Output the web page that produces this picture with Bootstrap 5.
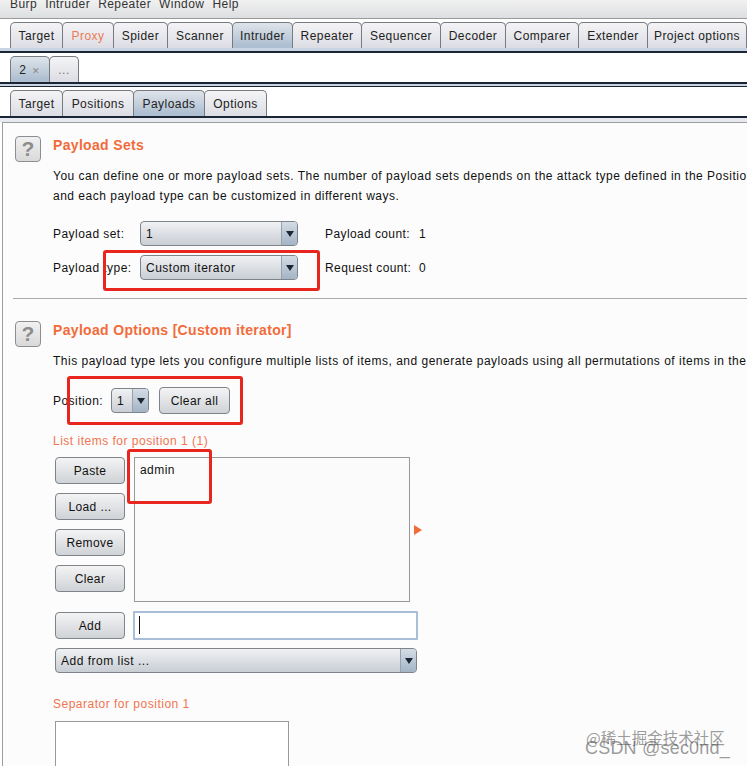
<!DOCTYPE html>
<html lang="en">
<head>
  <meta charset="UTF-8">
  <title>Burp Intruder</title>
  <link href="https://cdn.jsdelivr.net/npm/bootstrap@5.3.3/dist/css/bootstrap.min.css" rel="stylesheet">
  <style>
    html, body { height: 766px; overflow: hidden; }
    body { position: relative; width: 747px; background: #fff; color: #111; font-family: "Liberation Sans", Arial, sans-serif; font-size: 12px; line-height: 14px; letter-spacing: .45px; }

    .menu-strip { height: 19px; padding-left: 10px; gap: 8px; overflow: hidden; background: linear-gradient(#f1f1f1, #dcdee0); border-bottom: 1px solid #9a9a9a; }
    .menu-strip span { margin-top: -3px; color: #333; }

    .tab-strip { padding-left: 10px; flex-wrap: nowrap; overflow: hidden; }
    .tab-top { padding-top: 3px; height: 34px; background: #fff; border-bottom: 2px solid #1c2536; }
    .tab-mid { padding-top: 3px; height: 29px; }
    .tab-rule { height: 2px; background: #1c2536; }
    .tab-rule-thin { height: 1px; background: #1c2536; }
    .tab-item { flex: none; height: 26px; line-height: 26px; padding: 0 2px; text-align: center; color: #222; letter-spacing: .45px; border: 1px solid #767b80; border-bottom: 0; border-radius: 5px 5px 0 0; background: linear-gradient(#f4f4f6, #dcdde4); margin-right: -1px; }
    .tab-on { background: linear-gradient(#dfe4ea, #aebfd1 90%); }
    .tab-band { height: 3px; background: #c9d4e2; }
    .tab-band-thin { height: 2px; background: #c9d4e2; }
    .tab-band-wide { height: 4px; background: #e6eaef; }
    .tab-proxy { color: #ee7a55; }
    .tab-more { color: #777; }
    .tab-close { color: #888; font-size: 9px; margin-left: 6px; }

    .pane { margin-left: 2px; height: 644px; padding: 13px 0 0 12px; background: #fcfcfc; border-left: 1px solid #9c9c9c; border-top: 1px solid #9c9c9c; overflow: hidden; }
    .help-key { flex: none; width: 26px; height: 26px; line-height: 24px; text-align: center; font-size: 21px; font-weight: 700; color: #8d8d8d; letter-spacing: 0; border: 1px solid #8a8f94; border-radius: 4px; background: linear-gradient(#f1f1f1, #d9d9d9); }
    .sect-title { margin: 0 0 0 12px; font-size: 14px; line-height: 18px; font-weight: 700; color: #f26b3a; letter-spacing: .33px; }
    .sect-copy { margin: 4px 0 0 38px; white-space: nowrap; line-height: 20px; letter-spacing: .5px; }
    .field-row { margin-left: 38px; height: 25px; align-items: center; white-space: nowrap; }
    .field-first { margin-top: 15px; }
    .field-label { width: 87px; flex: none; }
    .combo { flex: none; height: 25px; line-height: 24px; padding-left: 5px; letter-spacing: .5px; border: 1px solid #7e8489; border-radius: 4px; background: linear-gradient(#f0f1f3, #c9ced5); overflow: hidden; }
    .combo-arrow { width: 16px; height: 100%; margin-left: auto; display: flex; align-items: center; justify-content: center; border-left: 1px solid #98a2ad; background: linear-gradient(#d4dce5, #a3b4c6); }
    .combo-arrow i { width: 0; height: 0; border: 4px solid transparent; border-top: 6px solid #1d2733; border-bottom: 0; }
    .count-label { width: 94px; margin-left: 27px; letter-spacing: .4px; }
    .sect-rule { height: 1px; background: #aaa; margin: 18px 0 0 -2px; }

    .burp-btn { flex: none; height: 27px; padding: 1px 0 0; color: #111; font-size: 12px; line-height: 25px; letter-spacing: .4px; border: 1px solid #7e8489; border-radius: 4px; background: linear-gradient(#f4f4f5, #cfd2d6); }
    .side-btn { width: 70px; }
    .add-btn { margin-top: 1px; }
    .clear-all { width: 71px; margin-left: 10px; }
    .sub-head { margin: 0 0 0 38px; color: #ef7550; line-height: 14px; letter-spacing: .5px; }
    .item-col { margin-left: 40px; gap: 9px; }
    .item-list { width: 276px; height: 145px; padding: 5px 5px; background: #fbfbfb; border: 1px solid #999; margin-left: 9px; }
    .item-arrow { align-self: center; margin: 0 0 0 4px; width: 0; height: 0; border: 5px solid transparent; border-left: 8px solid #f26b3a; border-right: 0; }
    .add-input { width: 285px; height: 29px; margin-left: 8px; padding: 0 4px; border: 2px solid #a9bfd9; border-radius: 1px; background: #fff; }
    .caret-bar { display: block; width: 1px; height: 18px; margin-top: 3px; background: #111; }
    .sep-box { margin-left: 40px; width: 234px; height: 80px; background: #fff; border: 1px solid #999; }

    .red-mark { position: absolute; border: 3px solid #e8261e; border-radius: 3px; pointer-events: none; }
    .mark-a { left: 103px; top: 250px; width: 217px; height: 41px; }
    .mark-b { left: 67px; top: 376px; width: 176px; height: 49px; }
    .mark-c { left: 127px; top: 449px; width: 85px; height: 55px; }
    .stamp { position: absolute; color: rgba(70,70,70,.55); white-space: nowrap; }
    .stamp-cn { left: 586px; top: 729px; font-size: 15.5px; font-family: "Noto Sans CJK SC", sans-serif; line-height: 16px; letter-spacing: 0; }
    .stamp-en { left: 585px; top: 738px; font-size: 18px; line-height: 20px; letter-spacing: .2px; }
  </style>
</head>
<body>

  <div class="menu-strip d-flex">
    <span>Burp</span><span>Intruder</span><span>Repeater</span><span>Window</span><span>Help</span>
  </div>

  <div class="tab-top">
    <div class="tab-strip d-flex">
      <div class="tab-item" style="width:53px">Target</div>
      <div class="tab-item tab-proxy" style="width:52px">Proxy</div>
      <div class="tab-item" style="width:55px">Spider</div>
      <div class="tab-item" style="width:66px">Scanner</div>
      <div class="tab-item tab-on" style="width:61px">Intruder</div>
      <div class="tab-item" style="width:70px">Repeater</div>
      <div class="tab-item" style="width:80px">Sequencer</div>
      <div class="tab-item" style="width:66px">Decoder</div>
      <div class="tab-item" style="width:74px">Comparer</div>
      <div class="tab-item" style="width:70px">Extender</div>
      <div class="tab-item" style="width:100px">Project options</div>
    </div>
    <div class="tab-band"></div>
  </div>

  <div class="tab-mid tab-strip d-flex">
    <div class="tab-item tab-on" style="width:40px">2<span class="tab-close">&#10005;</span></div>
    <div class="tab-item tab-more" style="width:30px">...</div>
  </div>
  <div class="tab-rule"></div>
  <div class="tab-band-thin"></div>
  <div class="tab-rule-thin"></div>

  <div class="tab-mid tab-strip d-flex">
    <div class="tab-item" style="width:53px">Target</div>
    <div class="tab-item" style="width:72px">Positions</div>
    <div class="tab-item tab-on" style="width:72px">Payloads</div>
    <div class="tab-item" style="width:63px">Options</div>
  </div>
  <div class="tab-rule"></div>
  <div class="tab-band-wide"></div>

  <div class="pane">
    <div class="d-flex">
      <div class="help-key">?</div>
      <h2 class="sect-title">Payload Sets</h2>
    </div>
    <p class="sect-copy mb-0">You can define one or more payload sets. The number of payload sets depends on the attack type defined in the Positions tab. Various payload types are available for each payload set,<br>and each payload type can be customized in different ways.</p>

    <div class="field-row field-first d-flex">
      <span class="field-label">Payload set:</span>
      <div class="combo d-flex" style="width:158px">1<span class="combo-arrow"><i></i></span></div>
      <span class="count-label">Payload count:</span><span>1</span>
    </div>
    <div class="field-row d-flex" style="margin-top:9px">
      <span class="field-label">Payload type:</span>
      <div class="combo d-flex" style="width:158px">Custom iterator<span class="combo-arrow"><i></i></span></div>
      <span class="count-label">Request count:</span><span>0</span>
    </div>
    <div class="sect-rule"></div>

    <div class="d-flex" style="margin-top:22px">
      <div class="help-key">?</div>
      <h2 class="sect-title">Payload Options [Custom iterator]</h2>
    </div>
    <p class="sect-copy mb-0">This payload type lets you configure multiple lists of items, and generate payloads using all permutations of items in the lists.</p>

    <div class="field-row d-flex" style="margin-top:17px">
      <span style="width:58px">Position:</span>
      <div class="combo d-flex" style="width:38px">1<span class="combo-arrow"><i></i></span></div>
      <button type="button" class="btn burp-btn clear-all">Clear all</button>
    </div>

    <p class="sub-head" style="margin-top:21px">List items for position 1 (1)</p>

    <div class="d-flex" style="margin-top:9px">
      <div class="item-col d-flex flex-column">
        <button type="button" class="btn burp-btn side-btn">Paste</button>
        <button type="button" class="btn burp-btn side-btn">Load ...</button>
        <button type="button" class="btn burp-btn side-btn">Remove</button>
        <button type="button" class="btn burp-btn side-btn">Clear</button>
      </div>
      <div class="item-list">admin</div>
      <div class="item-arrow"></div>
    </div>

    <div class="d-flex" style="margin-top:9px;margin-left:40px">
      <button type="button" class="btn burp-btn side-btn add-btn">Add</button>
      <div class="add-input"><span class="caret-bar"></span></div>
    </div>

    <div class="combo d-flex" style="width:362px;margin:8px 0 0 40px">Add from list ...<span class="combo-arrow"><i></i></span></div>

    <p class="sub-head" style="margin-top:24px">Separator for position 1</p>
    <div class="sep-box" style="margin-top:10px"></div>
  </div>

  <div class="red-mark mark-a"></div>
  <div class="red-mark mark-b"></div>
  <div class="red-mark mark-c"></div>
  <div class="stamp stamp-cn">@稀土掘金技术社区</div>
  <div class="stamp stamp-en">CSDN @sec0nd_</div>

</body>
</html>
